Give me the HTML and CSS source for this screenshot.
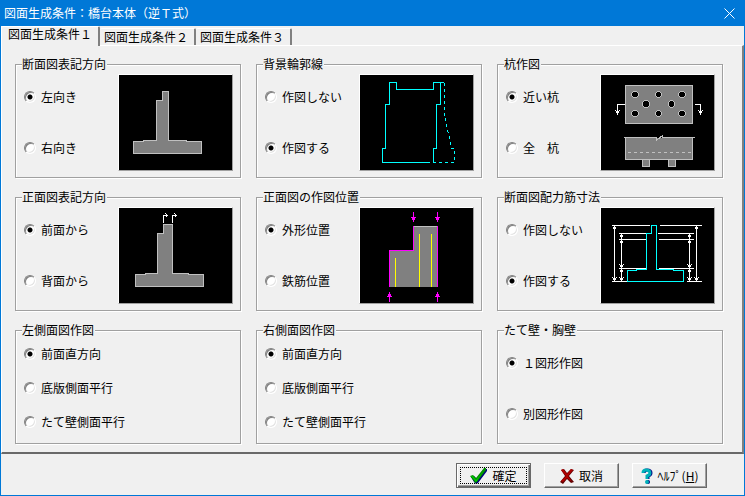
FILE: index.html
```html
<!DOCTYPE html>
<html lang="ja">
<head>
<meta charset="utf-8">
<title>図面生成条件</title>
<link rel="stylesheet" href="styles.css">
</head>
<body>
<main class="window">
  <header class="titlebar">
    <h1>図面生成条件：橋台本体（逆Ｔ式）</h1>
    <button class="close" type="button" aria-label="閉じる">
      <svg width="11" height="11" viewBox="0 0 11 11"><path d="M.5 .5L10.5 10.5M10.5 .5L.5 10.5"/></svg>
    </button>
  </header>

  <div class="tabs" role="tablist">
    <button class="tab active" type="button" role="tab" aria-selected="true">図面生成条件１</button>
    <button class="tab" type="button" role="tab" aria-selected="false">図面生成条件２</button>
    <button class="tab" type="button" role="tab" aria-selected="false">図面生成条件３</button>
  </div>

  <form class="panel" id="conditions">
    <fieldset class="group">
      <legend>断面図表記方向</legend>
      <div class="body">
        <div class="options">
          <label><input type="radio" name="section" checked>左向き</label>
          <label><input type="radio" name="section">右向き</label>
        </div>
        <svg class="figure" viewBox="0 0 113 95"><g transform="translate(.5 .5)">
          <path class="solid" d="M43 16H49V65H67V66H82V78H14V66H24V65H37V25H43Z"/>
        </g></svg>
      </div>
    </fieldset>

    <fieldset class="group">
      <legend>背景輪郭線</legend>
      <div class="body">
        <div class="options">
          <label><input type="radio" name="outline">作図しない</label>
          <label><input type="radio" name="outline" checked>作図する</label>
        </div>
        <svg class="figure" viewBox="0 0 113 95"><g transform="translate(.5 .5)">
          <path class="cyan" d="M66 87H22V73H25V29H29V7H36V14H73V7H83M80 7V29H76V73H73V87"/>
          <path class="cyan" stroke-dasharray="3 3" d="M84 7V39L91 73H94V87H66"/>
        </g></svg>
      </div>
    </fieldset>

    <fieldset class="group">
      <legend>杭作図</legend>
      <div class="body">
        <div class="options">
          <label><input type="radio" name="pile" checked>近い杭</label>
          <label><input type="radio" name="pile">全　杭</label>
        </div>
        <svg class="figure" viewBox="0 0 113 95"><g transform="translate(.5 .5)">
          <path class="solid" d="M24 10H91V48H24Z"/>
          <g class="hole">
            <path d="M32 16H35L37 18V20L35 22H32L30 20V18ZM56 16H58L60 18V20L58 22H56L54 20V18ZM79 16H82L84 18V20L82 22H79L77 20V18Z"/>
            <path d="M43 25H46L48 27V30L46 32H43L41 30V27ZM69 25H71L73 27V30L71 32H69L67 30V27Z"/>
            <path d="M32 35H35L37 37V39L35 41H32L30 39V37ZM56 35H58L60 37V39L58 41H56L54 39V37ZM79 35H82L84 37V39L82 41H79L77 39V37Z"/>
          </g>
          <path class="white" d="M23 29H16V39M14 35L16 38L18 35M93 29H99V39M97 35L99 38L101 35"/>
          <path class="solid" d="M41 84H48V91H41ZM67 84H74V91H67Z"/>
          <path class="fill" d="M24 62H91V84H24Z"/>
          <path class="light" d="M24 62V84H91V62M22 62H55V65L61 60V62H93"/>
          <path class="light" stroke-dasharray="3 3" d="M26 77H91"/>
        </g></svg>
      </div>
    </fieldset>

    <fieldset class="group">
      <legend>正面図表記方向</legend>
      <div class="body">
        <div class="options">
          <label><input type="radio" name="front" checked>前面から</label>
          <label><input type="radio" name="front">背面から</label>
        </div>
        <svg class="figure" viewBox="0 0 113 95"><g transform="translate(.5 .5)">
          <path class="solid" d="M44 16H53V65H69V66H84V78H16V66H26V65H38V25H44Z"/>
          <path class="white" d="M44 14V7H48M46 5L48 7L46 9M53 14V7H57M55 5L57 7L55 9"/>
        </g></svg>
      </div>
    </fieldset>

    <fieldset class="group">
      <legend>正面図の作図位置</legend>
      <div class="body">
        <div class="options">
          <label><input type="radio" name="position" checked>外形位置</label>
          <label><input type="radio" name="position">鉄筋位置</label>
        </div>
        <svg class="figure" viewBox="0 0 113 95"><g transform="translate(.5 .5)">
          <path class="fill" d="M29 42H53V18H77V78H29Z"/>
          <path class="light" d="M53 18H77"/>
          <path class="yellow" d="M35 49V78M59 25V78M71 25V78"/>
          <path class="magenta" d="M29 78V42H53V18M77 18V78"/>
          <path class="magenta" d="M53 4V13M51 9H55M52 10H54M52 11H54M77 4V13M75 9H79M76 10H78M76 11H78"/>
          <path class="magenta" d="M29 84V93M27 88H31M28 87H30M28 86H30M77 84V93M75 88H79M76 87H78M76 86H78"/>
        </g></svg>
      </div>
    </fieldset>

    <fieldset class="group">
      <legend>断面図配力筋寸法</legend>
      <div class="body">
        <div class="options">
          <label><input type="radio" name="dimension">作図しない</label>
          <label><input type="radio" name="dimension" checked>作図する</label>
        </div>
        <svg class="figure" viewBox="0 0 113 95"><g transform="translate(.5 .5)">
          <path class="white" d="M10 17H48M58 17H100M17 25H45M56 25H92M17 31H45M57 31H92M17 60H45M57 60H92M10 73H25M85 73H100M13 17V73M20 25V73M88 25V73M95 17V73"/>
          <path class="white" d="M11 21L13 18L15 21M93 21L95 18L97 21M11 69L13 72L15 69M93 69L95 72L97 69M18 29L20 26L22 29M86 29L88 26L90 29M18 35L20 32L22 35M86 35L88 32L90 35M18 56L20 59L22 56M86 56L88 59L90 56M18 64L20 61L22 64M86 64L88 61L90 64M18 69L20 72L22 69M86 69L88 72L90 69"/>
          <path class="cyan" d="M50 17H55V61H72V62H82V73H26V62H35V61H45V25H50Z"/>
        </g></svg>
      </div>
    </fieldset>

    <fieldset class="group">
      <legend>左側面図作図</legend>
      <div class="body">
        <div class="options three">
          <label><input type="radio" name="left" checked>前面直方向</label>
          <label><input type="radio" name="left">底版側面平行</label>
          <label><input type="radio" name="left">たて壁側面平行</label>
        </div>
      </div>
    </fieldset>

    <fieldset class="group">
      <legend>右側面図作図</legend>
      <div class="body">
        <div class="options three">
          <label><input type="radio" name="right" checked>前面直方向</label>
          <label><input type="radio" name="right">底版側面平行</label>
          <label><input type="radio" name="right">たて壁側面平行</label>
        </div>
      </div>
    </fieldset>

    <fieldset class="group">
      <legend>たて壁・胸壁</legend>
      <div class="body">
        <div class="options">
          <label><input type="radio" name="wall" checked>１図形作図</label>
          <label><input type="radio" name="wall">別図形作図</label>
        </div>
      </div>
    </fieldset>
  </form>

  <footer class="actions">
    <button class="push default" type="submit" form="conditions">
      <svg width="17" height="16" viewBox="0 0 17 16"><path fill="#000080" d="M1 9L4 8L7 11L15 1H17V3L8 15L6 16L4 14Z"/><path fill="#008c00" d="M0 8L3 7L6 10L14 0H16V2L7 14L5 15L4 13Z"/><path fill="#00c800" d="M1 8L3 8L6 12L15 1L6 14Z"/></svg>
      <span>確定</span>
    </button>
    <button class="push" type="button">
      <svg width="14" height="16" viewBox="0 0 14 16"><path fill="#600000" d="M1 2L4 1L7 5L11 1L14 2L9 8L14 14L11 15L7 11L3 16L0 14L5 8Z"/><path fill="#b00000" d="M1 2L3 1L7 6L11 1L13 2L8 8L12 14L7 10L3 14L1 13L6 8Z"/></svg>
      <span>取消</span>
    </button>
    <button class="push" type="button">
      <svg width="12" height="16" viewBox="0 0 12 16"><path fill="none" stroke="#000080" stroke-width="3" d="M3 5Q3 2 6 2Q10 2 10 5Q10 7 7 8V11"/><path fill="none" stroke="#00b0b8" stroke-width="3" d="M2 5Q2 2 5 2Q9 2 9 5Q9 7 6 8V11"/><circle cx="7" cy="14" r="2" fill="#000080"/><circle cx="6" cy="14" r="2" fill="#00b0b8"/></svg>
      <span>ﾍﾙﾌﾟ(<u>H</u>)</span>
    </button>
  </footer>
</main>
</body>
</html>
```
FILE: styles.css
```css
* {
  box-sizing: border-box;
}

body {
  margin: 0;
  background: #f0f0f0;
  color: #000;
  font: 12px/14px "Noto Sans CJK JP", sans-serif;
}

button {
  margin: 0;
  color: inherit;
  font: inherit;
}

.window {
  display: flex;
  flex-direction: column;
  min-height: 100vh;
  border: 1px solid #0078d7;
  border-top: 0;
}

.titlebar {
  display: flex;
  align-items: center;
  justify-content: space-between;
  height: 26px;
  padding: 0 9px 0 3px;
  background: #0078d7;
  color: #fff;
}

.titlebar h1 {
  margin: 0;
  font-size: 12px;
  font-weight: 400;
}

.close {
  display: flex;
  padding: 0;
  border: 0;
  background: none;
}

.close path {
  fill: none;
  stroke: #fff;
}

.tabs {
  display: flex;
  align-items: flex-end;
  height: 19px;
}

.tab {
  height: 17px;
  padding: 0 6px 1px 4px;
  border: 0;
  border-top: 1px solid #fff;
  border-right: 2px solid #808080;
  border-radius: 2px 2px 0 0;
  background: #f0f0f0;
  white-space: nowrap;
}

.tab.active {
  z-index: 1;
  height: 20px;
  margin-bottom: -1px;
  padding: 0 6px 5px;
  border-left: 1px solid #fff;
}

.panel {
  display: grid;
  grid-template-columns: repeat(3, 1fr);
  gap: 12px 15px;
  padding: 11px 19px 8px 13px;
  border: solid;
  border-width: 1px 2px 2px 1px;
  border-color: #fff #808080 #696969 #fff;
}

.group {
  min-width: 0;
  margin: 0;
  padding: 3px 7px 6px 8px;
  border: 1px solid #a0a0a0;
  box-shadow: 1px 1px #fff, inset 1px 1px #fff;
}

.group legend {
  margin-left: -2px;
  padding: 0 1px 0 0;
  background: #f0f0f0;
}

.body {
  display: flex;
  justify-content: space-between;
  min-height: 97px;
}

.options {
  display: flex;
  flex-direction: column;
  gap: 35px;
  padding-top: 15px;
}

.options.three {
  gap: 18px;
  padding-top: 6px;
}

.options label {
  display: flex;
  align-items: center;
  gap: 5px;
  height: 16px;
  white-space: nowrap;
}

.options input {
  appearance: none;
  width: 12px;
  height: 12px;
  margin: 0;
  border: 1px solid;
  border-color: #808080 #fff #fff #808080;
  border-radius: 50%;
  background: #fff;
  box-shadow: inset 1px 1px #808080, inset -1px -1px #e3e3e3;
}

.options input:checked {
  background: radial-gradient(circle, #000 2px, #fff 3px);
}

.figure {
  flex: none;
  width: 115px;
  height: 97px;
  border: 1px solid;
  border-color: #fff #a0a0a0 #a0a0a0 #fff;
  background: #000;
  fill: none;
  shape-rendering: crispEdges;
}

.solid {
  fill: #808080;
  stroke: #c0c0c0;
}

.fill {
  fill: #808080;
}

.hole {
  fill: #000;
  stroke: #c0c0c0;
}

.light {
  stroke: #c0c0c0;
}

.white {
  stroke: #fff;
}

.cyan {
  stroke: #0ff;
}

.yellow {
  stroke: #ff0;
}

.magenta {
  stroke: #f0f;
  stroke-linecap: square;
}

.actions {
  display: flex;
  justify-content: flex-end;
  gap: 13px;
  padding: 9px 37px 7px;
}

.push {
  display: flex;
  align-items: center;
  justify-content: center;
  gap: 5px;
  width: 75px;
  height: 25px;
  padding: 0;
  border: 1px solid;
  border-color: #fff #696969 #696969 #fff;
  background: #f0f0f0;
  box-shadow: inset -1px -1px #a0a0a0;
  white-space: nowrap;
}

.push.default {
  border-color: #696969;
  box-shadow: inset 1px 1px #fff, inset -1px -1px #696969, inset -2px -2px #a0a0a0;
  outline: 1px dotted #000;
  outline-offset: -5px;
}
```
